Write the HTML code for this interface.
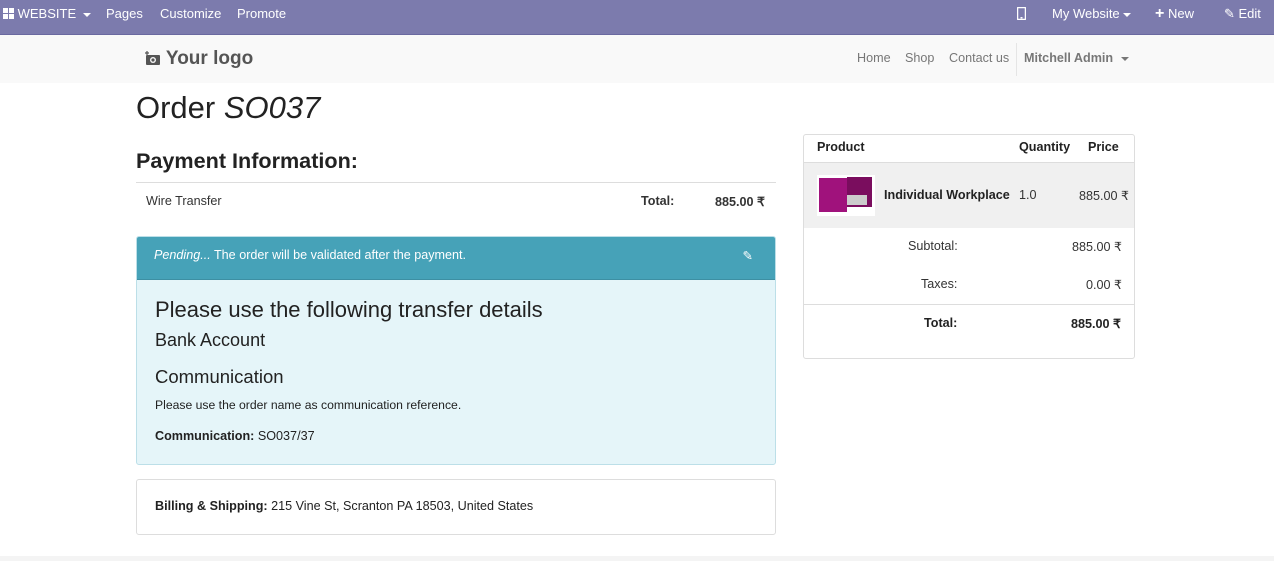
<!DOCTYPE html>
<html><head><style>
*{margin:0;padding:0;box-sizing:border-box}
body{width:1274px;height:561px;position:relative;font-family:"Liberation Sans",sans-serif;font-size:12.6px;color:#333;background:#fff;overflow:hidden}
.a{position:absolute;white-space:nowrap}
.top{position:absolute;left:0;top:0;width:1274px;height:35px;background:#7c7bad;border-bottom:1px solid #6a69a0;color:#fff;font-size:13px}
.top .a{top:6px}
.hdr{position:absolute;left:0;top:35px;width:1274px;height:48px;background:#f9f9f9}
.b{font-weight:bold}
.caret{display:inline-block;border-left:4px solid transparent;border-right:4px solid transparent;border-top:4px solid currentColor;vertical-align:middle;margin-left:3px}
</style></head><body>
<div class="top">
 <div class="a" style="left:3px"><svg width="11" height="11" style="vertical-align:-1px"><rect x="0" y="0" width="5" height="5" fill="#fff"/><rect x="6" y="0" width="5" height="5" fill="#fff"/><rect x="0" y="6" width="5" height="5" fill="#fff"/><rect x="6" y="6" width="5" height="5" fill="#fff"/></svg> WEBSITE <span class="caret"></span></div>
 <div class="a" style="left:106px">Pages</div>
 <div class="a" style="left:160px">Customize</div>
 <div class="a" style="left:237px">Promote</div>
 <div class="a" style="left:1017px;top:7px"><svg width="9" height="13"><rect x="0.5" y="0.5" width="8" height="12" rx="1" fill="none" stroke="#fff" stroke-width="1.5"/><rect x="3.5" y="10" width="2" height="1.5" fill="#fff"/></svg></div>
 <div class="a" style="left:1052px">My Website<span class="caret"></span></div>
 <div class="a" style="left:1155px"><b style="font-size:16px;line-height:13px">+</b> New</div>
 <div class="a" style="left:1224px">✎ Edit</div>
</div>
<div class="hdr">
 <div class="a" style="left:145px;top:13px;font-size:19px;font-weight:bold;color:#555"><svg width="16" height="14" style="vertical-align:-1px"><rect x="1" y="4" width="14" height="10" rx="1" fill="#555"/><circle cx="8" cy="9" r="3" fill="#f9f9f9"/><circle cx="8" cy="9" r="1.6" fill="#555"/><path d="M2 0v4M0 2h4" stroke="#555" stroke-width="1.2"/></svg> Your logo</div>
 <div class="a" style="left:857px;top:16px;color:#777">Home</div>
 <div class="a" style="left:905px;top:16px;color:#777">Shop</div>
 <div class="a" style="left:949px;top:16px;color:#777">Contact us</div>
 <div class="a" style="left:1016px;top:8px;width:1px;height:33px;background:#e5e5e5"></div>
 <div class="a b" style="left:1024px;top:16px;color:#777">Mitchell Admin <span class="caret" style="margin-left:4px"></span></div>
</div>
<div class="a" style="left:136px;top:90px;font-size:31px;color:#222">Order <i>SO037</i></div>
<div class="a b" style="left:136px;top:148px;font-size:21.6px;color:#222">Payment Information:</div>
<div class="a" style="left:136px;top:182px;width:640px;height:1px;background:#ddd"></div>
<div class="a" style="left:146px;top:194px">Wire Transfer</div>
<div class="a b" style="left:641px;top:194px">Total:</div>
<div class="a b" style="left:715px;top:194px">885.00 ₹</div>
<div class="a" style="left:136px;top:236px;width:640px;height:229px;border:1px solid #bcdfe8;border-radius:3px;background:#e5f5f9;overflow:hidden">
 <div style="height:43px;background:#46a2b8;border-bottom:1px solid #3d8fa3;color:#fff;padding:11px 17px;position:relative"><i>Pending...</i> The order will be validated after the payment.<span style="position:absolute;right:22px;top:11px">✎</span></div>
 <div class="a" style="left:18px;top:60px;font-size:22px;color:#222">Please use the following transfer details</div>
 <div class="a" style="left:18px;top:93px;font-size:18px;color:#222">Bank Account</div>
 <div class="a" style="left:18px;top:129px;font-size:18.5px;color:#222">Communication</div>
 <div class="a" style="left:18px;top:161px;font-size:12.2px;color:#222">Please use the order name as communication reference.</div>
 <div class="a" style="left:18px;top:192px;color:#222"><b>Communication:</b> SO037/37</div>
</div>
<div class="a" style="left:136px;top:479px;width:640px;height:56px;border:1px solid #ddd;border-radius:3px">
 <div class="a" style="left:18px;top:19px;color:#222"><b>Billing &amp; Shipping:</b> 215 Vine St, Scranton PA 18503, United States</div>
</div>
<div class="a" style="left:803px;top:134px;width:332px;height:225px;border:1px solid #ddd;border-radius:3px;overflow:hidden">
 <div class="a b" style="left:13px;top:5px;color:#222">Product</div>
 <div class="a b" style="left:215px;top:5px;color:#222">Quantity</div>
 <div class="a b" style="left:284px;top:5px;color:#222">Price</div>
 <div class="a" style="left:0;top:27px;width:332px;height:66px;background:#f0f0f0;border-top:1px solid #ddd">
  <div class="a" style="left:13px;top:12px;width:58px;height:41px;background:#fff"><div style="position:absolute;left:2px;top:3px;width:28px;height:34px;background:#a0127c"></div><div style="position:absolute;left:30px;top:2px;width:25px;height:30px;background:#7a0d5e"></div><div style="position:absolute;left:30px;top:20px;width:20px;height:10px;background:#ccc"></div></div>
  <div class="a b" style="left:80px;top:25px;color:#222">Individual Workplace</div>
  <div class="a" style="left:215px;top:25px">1.0</div>
  <div class="a" style="left:275px;top:25px">885.00 ₹</div>
 </div>
 <div class="a" style="left:104px;top:104px">Subtotal:</div>
 <div class="a" style="left:268px;top:104px">885.00 ₹</div>
 <div class="a" style="left:117px;top:142px">Taxes:</div>
 <div class="a" style="left:282px;top:142px">0.00 ₹</div>
 <div class="a" style="left:0;top:169px;width:332px;height:1px;background:#ddd"></div>
 <div class="a b" style="left:120px;top:181px;color:#222">Total:</div>
 <div class="a b" style="left:267px;top:181px;color:#222">885.00 ₹</div>
</div>
<div class="a" style="left:0;top:556px;width:1274px;height:5px;background:#f4f4f4"></div>
</body></html>
